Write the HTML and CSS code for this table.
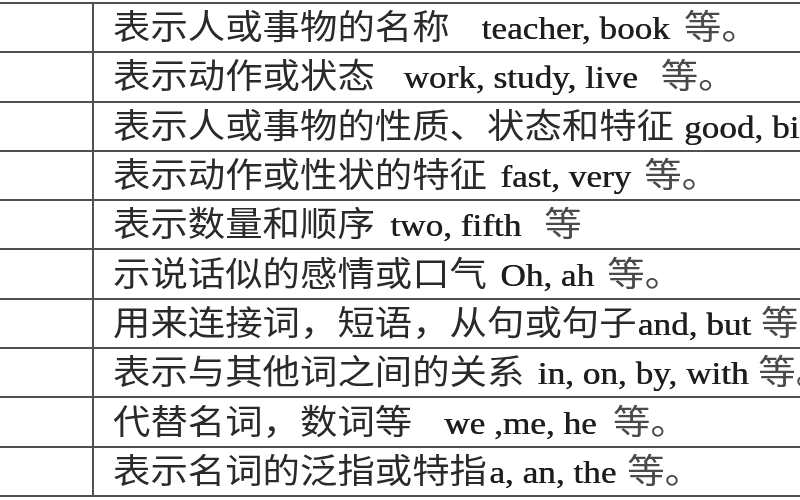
FILE: index.html
```html
<!DOCTYPE html>
<html lang="zh-CN">
<head>
<meta charset="utf-8">
<title>词类表</title>
<link rel="stylesheet" href="styles.css">
</head>
<body>
<div class="table">
  <div class="row"><div class="lead"></div><div class="cell"><span class="txt">表示人或事物的名称<span class="en" style="margin-left:29px">teacher, book</span><span class="tail" style="margin-left:13px">等。</span></span></div></div>
  <div class="row"><div class="lead"></div><div class="cell"><span class="txt">表示动作或状态<span class="en" style="margin-left:26px">work, study, live</span><span class="tail" style="margin-left:21px">等。</span></span></div></div>
  <div class="row"><div class="lead"></div><div class="cell"><span class="txt">表示人或事物的性质、状态和特征<span class="en" style="margin-left:9px">good, big</span><span class="tail" style="margin-left:12px">等。</span></span></div></div>
  <div class="row"><div class="lead"></div><div class="cell"><span class="txt">表示动作或性状的特征<span class="en" style="margin-left:12px">fast, very</span><span class="tail" style="margin-left:12px">等。</span></span></div></div>
  <div class="row"><div class="lead"></div><div class="cell"><span class="txt">表示数量和顺序<span class="en" style="margin-left:14px">two, fifth</span><span class="tail" style="margin-left:21px">等</span></span></div></div>
  <div class="row"><div class="lead"></div><div class="cell"><span class="txt">示说话似的感情或口气<span class="en" style="margin-left:12px">Oh, ah</span><span class="tail" style="margin-left:12px">等。</span></span></div></div>
  <div class="row"><div class="lead"></div><div class="cell"><span class="txt">用来连接词，短语，从句或句子<span class="en" style="margin-left:1px">and, but</span><span class="tail" style="margin-left:9px">等。</span></span></div></div>
  <div class="row"><div class="lead"></div><div class="cell"><span class="txt">表示与其他词之间的关系<span class="en" style="margin-left:12px">in, on, by, with</span><span class="tail" style="margin-left:9px">等。</span></span></div></div>
  <div class="row"><div class="lead"></div><div class="cell"><span class="txt">代替名词，数词等<span class="en" style="margin-left:29px">we ,me, he</span><span class="tail" style="margin-left:15px">等。</span></span></div></div>
  <div class="row"><div class="lead"></div><div class="cell"><span class="txt">表示名词的泛指或特指<span class="en" style="margin-left:2px">a, an, the</span><span class="tail" style="margin-left:10px">等。</span></span></div></div>
</div>
</body>
</html>
```
FILE: styles.css
```css
html, body {
  margin: 0;
  padding: 0;
  background: #ffffff;
  overflow: hidden;
}

.table {
  margin-top: 2px;
  width: 1000px;
  border-top: 2px solid #505050;
  display: flex;
  flex-direction: column;
}

.row {
  display: flex;
  height: 47.3px;
  border-bottom: 2px solid #505050;
  overflow: hidden;
}

.lead {
  flex: 0 0 92px;
  border-right: 2px solid #505050;
}

.cell {
  flex: 1 1 auto;
  display: flex;
  align-items: center;
  padding-left: 19px;
  padding-top: 1px;
  white-space: nowrap;
}

.txt {
  display: inline-block;
  font-family: "Liberation Serif", "Noto Sans CJK SC", serif;
  font-size: 34px;
  line-height: 34px;
  color: #2a2a2a;
  transform: scaleX(1.1);
  transform-origin: left center;
  filter: blur(0.45px);
}

.en {
  font-size: 32px;
  color: #1e1e1e;
  text-shadow: 0.5px 0 0 #1e1e1e;
}

.tail {
  color: #4a4a4a;
}
```
